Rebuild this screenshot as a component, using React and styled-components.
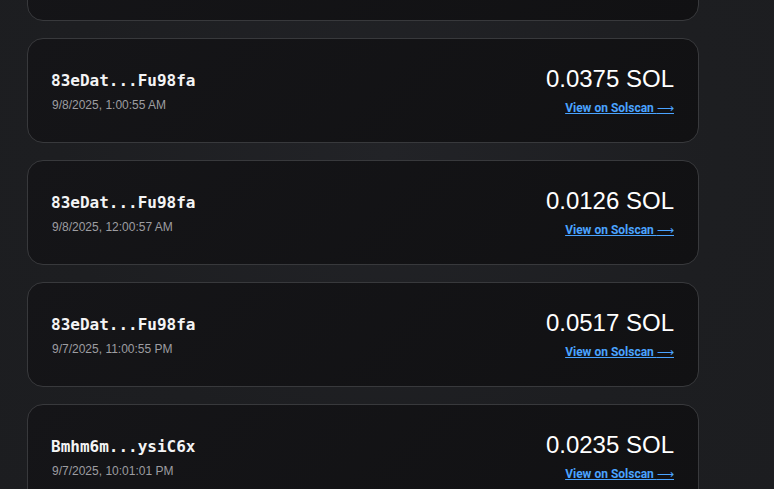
import React from "react";
import styled, { createGlobalStyle } from "styled-components";

const GlobalStyle = createGlobalStyle`
  html, body {
    margin: 0;
    padding: 0;
    background: #1d1e21;
    overflow: hidden;
  }
  body {
    font-family: "Liberation Sans", Arial, sans-serif;
    color: #fff;
  }
`;

const Page = styled.div`
  min-height: 489px;
  background: radial-gradient(ellipse at 50% 40%, #222327 0%, #1d1e21 60%, #1c1d20 100%);
  padding: 0 27px;
  box-sizing: border-box;
`;

// list is scrolled: first card is only partly visible
const List = styled.div`
  width: 672px;
  display: flex;
  flex-direction: column;
  gap: 17px;
  margin-top: -84px;
`;

const Card = styled.div`
  display: flex;
  align-items: center;
  justify-content: space-between;
  padding: 23px 24px;
  border: 1px solid #38393c;
  border-radius: 16px;
  background: linear-gradient(135deg, #151518 0%, #111113 100%);
`;

const Left = styled.div`
  display: flex;
  flex-direction: column;
  gap: 4px;
`;

const Address = styled.div`
  font-family: "DejaVu Sans Mono", "Liberation Mono", monospace;
  font-weight: bold;
  font-size: 16px;
  line-height: 24px;
  color: #f4f4f5;
  margin-left: -1px;
`;

const Time = styled.div`
  font-size: 12px;
  line-height: 16px;
  color: #9d9da1;
`;

const Right = styled.div`
  display: flex;
  flex-direction: column;
  align-items: flex-end;
  gap: 5px;
  padding: 1px 0 3px;
`;

const Amount = styled.div`
  font-size: 24px;
  line-height: 32px;
  color: #ffffff;
`;

const Link = styled.a`
  font-family: Roboto, "Liberation Sans", sans-serif;
  font-size: 12px;
  line-height: 16px;
  font-weight: bold;
  color: #4aa3ff;
  text-decoration: underline;
  cursor: pointer;
`;

const Arrow = styled.span`
  font-family: "DejaVu Sans", sans-serif;
  font-weight: normal;
`;

const txs = [
  { from: "83eDat", to: "Fu98fa", time: "9/8/2025, 2:00:41 AM", amount: "0.0412" },
  { from: "83eDat", to: "Fu98fa", time: "9/8/2025, 1:00:55 AM", amount: "0.0375" },
  { from: "83eDat", to: "Fu98fa", time: "9/8/2025, 12:00:57 AM", amount: "0.0126" },
  { from: "83eDat", to: "Fu98fa", time: "9/7/2025, 11:00:55 PM", amount: "0.0517" },
  { from: "Bmhm6m", to: "ysiC6x", time: "9/7/2025, 10:01:01 PM", amount: "0.0235" },
];

const App = () => {
  return (
    <>
      <GlobalStyle />
      <Page>
        <List>
          {txs.map((t, i) => (
            <Card key={i}>
              <Left>
                <Address>{t.from}...{t.to}</Address>
                <Time>{t.time}</Time>
              </Left>
              <Right>
                <Amount>{t.amount} SOL</Amount>
                <Link>View on Solscan <Arrow>⟶</Arrow></Link>
              </Right>
            </Card>
          ))}
        </List>
      </Page>
    </>
  );
};

export default App;
